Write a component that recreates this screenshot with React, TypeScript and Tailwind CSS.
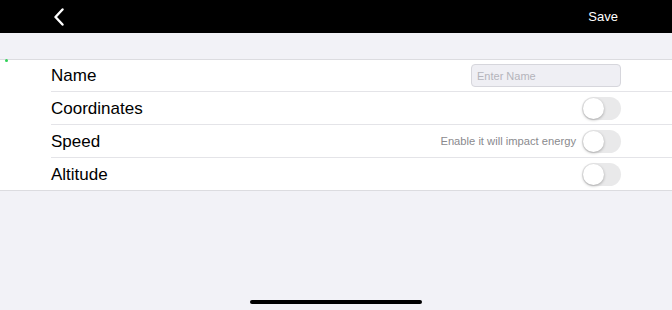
import { useState } from "react";

const font = { fontFamily: '"Liberation Sans", Arial, sans-serif' };

const Toggle = ({ on, onChange }: { on: boolean; onChange: () => void }) => (
  <button
    onClick={onChange}
    className={`relative w-[39px] h-[23px] rounded-full ${on ? "bg-[#34c759]" : "bg-[#e9e9ea]"}`}
  >
    <span
      className={`absolute top-[1px] w-[21px] h-[21px] rounded-full bg-white shadow-[0_1px_3px_rgba(0,0,0,0.3)] ${
        on ? "left-[17px]" : "left-[1px]"
      }`}
    />
  </button>
);

const App = () => {
  const [name, setName] = useState("");
  const [coords, setCoords] = useState(false);
  const [speed, setSpeed] = useState(false);
  const [altitude, setAltitude] = useState(false);

  return (
    <div className="h-[310px] w-full flex flex-col bg-[#f2f2f7] relative" style={font}>
      {/* Header */}
      <header className="h-[33px] bg-black flex items-center justify-between pl-[53px] pr-[54px]">
        <svg width="12" height="18" viewBox="0 0 12 18" fill="none">
          <path d="M9.5 1.5 L2.5 9 L9.5 16.5" stroke="white" strokeWidth="2.4" strokeLinecap="round" strokeLinejoin="round" />
        </svg>
        <span className="text-white text-[13px]">Save</span>
      </header>

      <div className="h-[26px]" />

      {/* Settings list */}
      <section className="bg-white border-y border-[#dcdce0]">
        <div className="pl-[51px]">
          <div className="h-[32px] flex items-center justify-between pr-[51px] border-b border-[#e4e4e8]">
            <span className="text-[17px] text-black pt-[1px]">Name</span>
            <input
              value={name}
              onChange={(e) => setName(e.target.value)}
              placeholder="Enter Name"
              className="w-[150px] h-[23px] rounded-[4px] border border-[#d6d6dc] bg-[#efeff4] px-[5px] text-[11px] text-black placeholder:text-[#b4b4bb] outline-none"
            />
          </div>
        </div>
        <div className="pl-[51px]">
          <div className="h-[33px] flex items-center justify-between pr-[51px] border-b border-[#e4e4e8]">
            <span className="text-[17px] text-black pt-[1px]">Coordinates</span>
            <Toggle on={coords} onChange={() => setCoords(!coords)} />
          </div>
        </div>
        <div className="pl-[51px]">
          <div className="h-[33px] flex items-center justify-between pr-[51px] border-b border-[#e4e4e8]">
            <span className="text-[17px] text-black pt-[1px]">Speed</span>
            <div className="flex items-center gap-[6px]">
              <span className="text-[11.2px] text-[#8a8a8e]">Enable it will impact energy</span>
              <Toggle on={speed} onChange={() => setSpeed(!speed)} />
            </div>
          </div>
        </div>
        <div className="pl-[51px]">
          <div className="h-[32px] flex items-center justify-between pr-[51px]">
            <span className="text-[17px] text-black pt-[1px]">Altitude</span>
            <Toggle on={altitude} onChange={() => setAltitude(!altitude)} />
          </div>
        </div>
      </section>

      {/* Home indicator */}
      <div className="flex-1 flex items-end justify-center pb-[6px]">
        <div className="w-[172px] h-[4px] rounded-full bg-black" />
      </div>

      {/* status dot */}
      <span className="absolute left-[5px] top-[59px] w-[3px] h-[3px] rounded-full bg-[#30d158]" />
    </div>
  );
};

export default App;
